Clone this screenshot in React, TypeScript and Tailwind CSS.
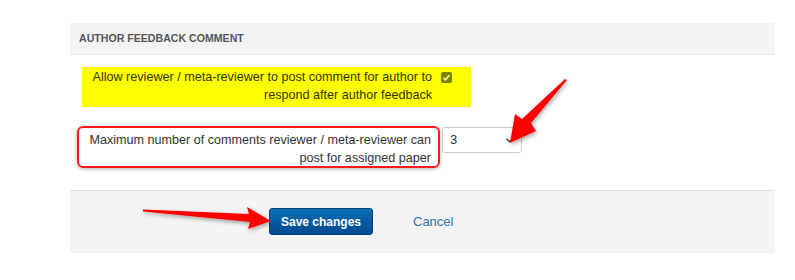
import React from "react";

const font = { fontFamily: '"Liberation Sans", Arial, sans-serif' };

function Arrows() {
  return (
    <svg className="pointer-events-none absolute inset-0" width="795" height="280" viewBox="0 0 795 280">
      <defs>
        <filter id="sh" x="-20%" y="-20%" width="140%" height="140%">
          <feDropShadow dx="1" dy="2" stdDeviation="2" floodColor="#000" floodOpacity="0.35" />
        </filter>
      </defs>
      <polygon
        filter="url(#sh)"
        fill="#ff0000"
        points="143,209.5 249,214 247,207 271,221 248,229 250,222 143,211.5"
      />
      <polygon
        filter="url(#sh)"
        fill="#ff0000"
        points="567,80 531,123 536,131 510,143 515,114 522,119 565,79"
      />
    </svg>
  );
}

export default function App() {
  return (
    <div className="relative w-[795px] h-[280px] bg-white overflow-hidden" style={font}>
      <div className="ml-[70px] mr-[20px] pt-[23px]">
        <div className="h-[32px] bg-[#f4f4f4] border-b border-[#e2e2e2] flex items-center pl-[9px]">
          <span className="text-[10.6px] font-bold text-[#555]">AUTHOR FEEDBACK COMMENT</span>
        </div>

        <div className="pt-[12px] pb-[22px]">
          <div className="ml-[12px] w-[389px] h-[40px] bg-[#ffff00] flex items-start pt-[1px]">
            <div className="w-[350px] text-right text-[12.6px] leading-[18px] whitespace-nowrap text-[#333300]">
              Allow reviewer / meta-reviewer to post comment for author to
              <br />
              respond after author feedback
            </div>
            <div className="ml-[9px] mt-[4px] w-[11px] h-[11px] rounded-[2px] bg-[#7f7f00] flex items-center justify-center">
              <svg width="9" height="9" viewBox="0 0 9 9">
                <path d="M1.5 4.8 L3.6 6.8 L7.5 2" stroke="#ffff90" strokeWidth="1.6" fill="none" />
              </svg>
            </div>
          </div>

          <div className="mt-[19px] flex items-start">
            <div className="ml-[7px] w-[363px] h-[42px] rounded-[6px] border-2 border-[#ff1a1a] shadow-[0_1px_4px_rgba(0,0,0,0.3)] pr-[7px] pt-[3px] text-right text-[12.6px] leading-[18px] whitespace-nowrap text-[#333]">
              Maximum number of comments reviewer / meta-reviewer can
              <br />
              post for assigned paper
            </div>
            <div className="ml-[2px] mt-[1px] w-[80px] h-[26px] border border-[#ccc] rounded-[3px] flex items-center justify-between pl-[7px] pr-[8px] text-[13px] text-[#333]">
              <span>3</span>
              <svg width="7" height="5" viewBox="0 0 7 5">
                <path d="M0.5 0.8 L3.5 3.8 L6.5 0.8" stroke="#444" strokeWidth="1.5" fill="none" />
              </svg>
            </div>
          </div>
        </div>

        <div className="h-[63px] bg-[#f4f4f4] border-t border-[#e2e2e2] flex items-center pl-[199px] pb-[1px]">
          <button className="w-[104px] h-[27px] rounded-[3px] bg-gradient-to-b from-[#0a6fb8] to-[#02498f] border border-[#03447f] text-white text-[12px] font-bold">
            Save changes
          </button>
          <span className="ml-[40px] text-[13px] text-[#2a79ae]">Cancel</span>
        </div>
      </div>
      <Arrows />
    </div>
  );
}
